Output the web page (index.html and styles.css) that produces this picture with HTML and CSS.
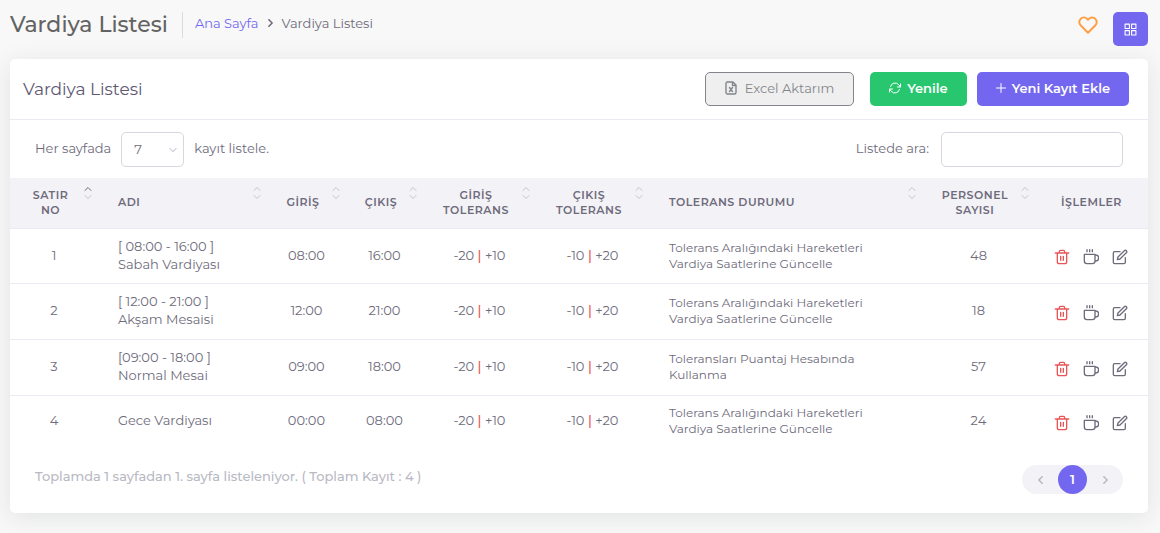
FILE: index.html
```html
<!DOCTYPE html>
<html lang="tr">
<head>
<meta charset="utf-8">
<meta name="viewport" content="width=device-width, initial-scale=1">
<title>Vardiya Listesi</title>
<link rel="stylesheet" href="styles.css">
</head>
<body>
<svg class="sprite" aria-hidden="true">
  <symbol id="trash" viewBox="0 0 24 24"><path d="M2 6h20M5 6v13a3 3 0 0 0 3 3h8a3 3 0 0 0 3-3V6M8 6V4a2 2 0 0 1 2-2h4a2 2 0 0 1 2 2v2M10 11v6M14 11v6"/></symbol>
  <symbol id="cup" viewBox="0 0 24 24"><path d="M2 8h16v10a4 4 0 0 1-4 4H6a4 4 0 0 1-4-4zM18 9h1a4 4 0 0 1 0 9h-1M6 1v3M10 1v3M14 1v3"/></symbol>
  <symbol id="edit" viewBox="0 0 24 24"><path d="M12 4H4a2 2 0 0 0-2 2v14a2 2 0 0 0 2 2h14a2 2 0 0 0 2-2v-7"/><path d="M18.500 2.500a2.100 2.100 0 0 1 3 3L12 15l-4 1 1-4z"/></symbol>
  <symbol id="down" viewBox="0 0 10 6"><path d="M1 1l4 4 4-4"/></symbol>
  <symbol id="sort" viewBox="0 0 8 12"><path class="up" d="M1 3.500l3-3 3 3"/><path class="dn" d="M1 8.500l3 3 3-3"/></symbol>
</svg>

<header class="page-head">
  <h1 class="page-title">Vardiya Listesi</h1>
  <nav class="crumbs" aria-label="Konum">
    <a href="#">Ana Sayfa</a>
    <svg class="crumb-arrow" viewBox="0 0 6 10"><path d="M1 1l4 4-4 4"/></svg>
    <span>Vardiya Listesi</span>
  </nav>
  <div class="page-tools">
    <button class="icon-btn heart" aria-label="Favorilere ekle"><svg viewBox="0 0 24 24"><path d="M20.840 4.610a5.500 5.500 0 0 0-7.780 0L12 5.670l-1.060-1.060a5.500 5.500 0 0 0-7.780 7.780L12 21.230l8.840-8.840a5.500 5.500 0 0 0 0-7.780z"/></svg></button>
    <button class="grid-btn" aria-label="Menü"><svg viewBox="0 0 24 24"><path d="M2 2h8v8H2zM14 2h8v8h-8zM14 14h8v8h-8zM2 14h8v8H2z"/></svg></button>
  </div>
</header>

<main class="card">
  <div class="card-head">
    <h2 class="card-title">Vardiya Listesi</h2>
    <div class="actions">
      <button class="btn btn-excel"><svg class="i-file" viewBox="0 0 12 14"><path d="M2.500 1H8l3 3v7.500A1.500 1.500 0 0 1 9.500 13h-7A1.500 1.500 0 0 1 1 11.500v-9A1.500 1.500 0 0 1 2.500 1zM7.500 1v3.500H11M4.500 6.500l3 4M7.500 6.500l-3 4"/></svg>Excel Aktarım</button>
      <button class="btn btn-green"><svg class="i-sync" viewBox="0 0 24 24"><path d="M23 4v6h-6M1 20v-6h6M3 9a9.500 9.500 0 0 1 16-4l4 5M1 14l4 5a9.500 9.500 0 0 0 16-4"/></svg>Yenile</button>
      <button class="btn btn-purple"><svg class="i-plus" viewBox="0 0 10 10"><path d="M5 0.500v9M0.500 5h9"/></svg>Yeni Kayıt Ekle</button>
    </div>
  </div>

  <div class="filters">
    <div class="field">
      <label for="size">Her sayfada</label>
      <span class="select-wrap">
        <select id="size" class="control select"><option>7</option><option>10</option><option>25</option></select>
        <svg class="caret" viewBox="0 0 10 6"><use href="#down"/></svg>
      </span>
      <label for="size">kayıt listele.</label>
    </div>
    <div class="field">
      <label for="search">Listede ara:</label>
      <input id="search" class="control search" type="search">
    </div>
  </div>

  <table class="grid">
    <colgroup><col class="c-no"><col class="c-name"><col class="c-in"><col class="c-out"><col class="c-tol"><col class="c-tol"><col class="c-state"><col class="c-tol"><col class="c-tol"></colgroup>
    <thead>
      <tr>
        <th class="asc">Satır No<svg class="sort"><use href="#sort"/></svg></th>
        <th class="left">Adı<svg class="sort"><use href="#sort"/></svg></th>
        <th>Giriş<svg class="sort"><use href="#sort"/></svg></th>
        <th>Çıkış<svg class="sort"><use href="#sort"/></svg></th>
        <th>Giriş Tolerans<svg class="sort"><use href="#sort"/></svg></th>
        <th>Çıkış Tolerans<svg class="sort"><use href="#sort"/></svg></th>
        <th class="left">Tolerans Durumu<svg class="sort"><use href="#sort"/></svg></th>
        <th>Personel Sayısı<svg class="sort"><use href="#sort"/></svg></th>
        <th class="plain">İşlemler</th>
      </tr>
    </thead>
    <tbody>
      <tr>
        <td>1</td><td class="left">[ 08:00 - 16:00 ]<br>Sabah Vardiyası</td><td>08:00</td><td>16:00</td>
        <td>-20 <i class="bar">|</i> +10</td><td>-10 <i class="bar">|</i> +20</td>
        <td class="left state">Tolerans Aralığındaki Hareketleri<br>Vardiya Saatlerine Güncelle</td><td>48</td>
        <td class="ops"><div class="ops-row"><button class="icon-btn red" aria-label="Sil"><svg><use href="#trash"/></svg></button><button class="icon-btn" aria-label="Molalar"><svg><use href="#cup"/></svg></button><button class="icon-btn" aria-label="Düzenle"><svg><use href="#edit"/></svg></button></div></td>
      </tr>
      <tr>
        <td>2</td><td class="left">[ 12:00 - 21:00 ]<br>Akşam Mesaisi</td><td>12:00</td><td>21:00</td>
        <td>-20 <i class="bar">|</i> +10</td><td>-10 <i class="bar">|</i> +20</td>
        <td class="left state">Tolerans Aralığındaki Hareketleri<br>Vardiya Saatlerine Güncelle</td><td>18</td>
        <td class="ops"><div class="ops-row"><button class="icon-btn red" aria-label="Sil"><svg><use href="#trash"/></svg></button><button class="icon-btn" aria-label="Molalar"><svg><use href="#cup"/></svg></button><button class="icon-btn" aria-label="Düzenle"><svg><use href="#edit"/></svg></button></div></td>
      </tr>
      <tr>
        <td>3</td><td class="left">[09:00 - 18:00 ]<br>Normal Mesai</td><td>09:00</td><td>18:00</td>
        <td>-20 <i class="bar">|</i> +10</td><td>-10 <i class="bar">|</i> +20</td>
        <td class="left state">Toleransları Puantaj Hesabında<br>Kullanma</td><td>57</td>
        <td class="ops"><div class="ops-row"><button class="icon-btn red" aria-label="Sil"><svg><use href="#trash"/></svg></button><button class="icon-btn" aria-label="Molalar"><svg><use href="#cup"/></svg></button><button class="icon-btn" aria-label="Düzenle"><svg><use href="#edit"/></svg></button></div></td>
      </tr>
      <tr>
        <td>4</td><td class="left">Gece Vardiyası</td><td>00:00</td><td>08:00</td>
        <td>-20 <i class="bar">|</i> +10</td><td>-10 <i class="bar">|</i> +20</td>
        <td class="left state">Tolerans Aralığındaki Hareketleri<br>Vardiya Saatlerine Güncelle</td><td>24</td>
        <td class="ops"><div class="ops-row"><button class="icon-btn red" aria-label="Sil"><svg><use href="#trash"/></svg></button><button class="icon-btn" aria-label="Molalar"><svg><use href="#cup"/></svg></button><button class="icon-btn" aria-label="Düzenle"><svg><use href="#edit"/></svg></button></div></td>
      </tr>
    </tbody>
  </table>

  <footer class="card-foot">
    <p class="summary">Toplamda 1 sayfadan 1. sayfa listeleniyor. ( Toplam Kayıt : 4 )</p>
    <nav class="pager" aria-label="Sayfalar">
      <button aria-label="Önceki"><svg viewBox="0 0 6 10"><path d="M5 1L1 5l4 4"/></svg></button>
      <button class="current" aria-current="page">1</button>
      <button aria-label="Sonraki"><svg viewBox="0 0 6 10"><path d="M1 1l4 4-4 4"/></svg></button>
    </nav>
  </footer>
</main>
</body>
</html>
```
FILE: styles.css
```css
* { box-sizing: border-box; }
body {
  margin: 0;
  padding: 0 12px 20px 10px;
  background: #f8f8f8;
  color: #6e6b7b;
  font: 400 13px/18px Montserrat, Inter, "Open Sans", sans-serif;
}
button, input, select { font: inherit; color: inherit; }
button { margin: 0; padding: 0; border: 0; background: none; cursor: pointer; }
svg { fill: none; stroke: currentColor; stroke-width: 2; stroke-linecap: round; stroke-linejoin: round; }
.sprite { display: none; }

.page-head { display: flex; align-items: flex-start; padding: 12px 0 13px; }
.page-title {
  margin: 0;
  padding-right: 14px;
  border-right: 1px solid #d6dce1;
  color: #636363;
  font-size: 22px;
  font-weight: 500;
  line-height: 26px;
}
.crumbs { display: flex; align-items: center; gap: 9px; padding: 2px 0 0 12px; }
.crumbs a { color: #7367f0; text-decoration: none; }
.crumb-arrow { width: 5px; height: 8px; }
.page-tools { display: flex; gap: 15px; margin-left: auto; }
.heart { height: 26px; color: #ff9f43; }
.heart svg { width: 20px; height: 20px; stroke-width: 2.4; }
.grid-btn {
  display: flex;
  align-items: center;
  justify-content: center;
  width: 35px;
  height: 34px;
  border-radius: 5px;
  background: #7367f0;
  color: #fff;
}
.grid-btn svg { width: 13px; height: 13px; }

.card { border-radius: 5px; background: #fff; box-shadow: 0 4px 24px rgba(34, 41, 47, 0.1); }
.card-head {
  display: flex;
  align-items: center;
  justify-content: space-between;
  padding: 13px 19px 13px 13px;
  border-bottom: 1px solid #ebe9f1;
}
.card-title { margin: 0; color: #5e5873; font-size: 17px; font-weight: 400; line-height: 24px; }
.actions { display: flex; gap: 10px; }
.btn {
  display: flex;
  align-items: center;
  gap: 6px;
  height: 34px;
  padding: 0 19px 2px;
  border-radius: 5px;
  color: #fff;
  font-weight: 600;
}
.btn svg { height: 12px; }
.btn-excel {
  gap: 8px;
  margin-right: 6px;
  border: 1px solid #82868b;
  background: #efefef;
  color: #82868b;
  font-weight: 400;
}
.btn .i-file { width: 12px; height: 14px; stroke-width: 1.4; }
.i-sync { width: 12px; stroke-width: 2; }
.btn-green { background: #28c76f; }
.btn-purple { background: #7367f0; }
.btn .i-plus { width: 10px; height: 10px; stroke-width: 1; }

.filters { display: flex; justify-content: space-between; padding: 12px 25px 11px; }
.field { display: flex; align-items: center; gap: 10px; }
.field label { padding-bottom: 3px; }
.control { height: 35px; border: 1px solid #d8d6de; border-radius: 5px; background: #fff; outline: 0; }
.select-wrap { position: relative; }
.select { display: block; width: 63px; padding: 0 12px 2px; appearance: none; }
.caret { position: absolute; top: 15px; right: 7px; width: 8px; height: 6px; color: #d0cdd8; stroke-width: 1.4; pointer-events: none; }
.search { width: 182px; padding: 0 12px; margin-left: 2px; }

.grid { width: 100%; border-collapse: collapse; table-layout: fixed; }
.c-no { width: 7.73%; }
.c-name { width: 14.85%; }
.c-in { width: 6.94%; }
.c-out { width: 6.77%; }
.c-tol { width: 9.93%; }
.c-state { width: 23.99%; }
.grid th {
  position: relative;
  height: 50px;
  padding: 0 23px 0 16px;
  background: #f3f2f7;
  font-size: 11px;
  font-weight: 600;
  line-height: 15px;
  letter-spacing: 0.5px;
  text-align: center;
  text-transform: uppercase;
}
.grid .plain { padding: 0; }
.grid td { height: 56px; padding: 0 0 2px; border-top: 1px solid #ebe9f1; text-align: center; }
.grid tr:first-child td { height: 55px; }
.grid tr:last-child td { height: 54px; padding-bottom: 4px; }
.grid .left { padding-left: 20px; text-align: left; }
.grid .state { padding: 0 0 0 20px; font-size: 12px; line-height: 16px; }
.grid tr:last-child .state { padding-bottom: 2px; }
.bar { color: #ea5455; font-style: normal; font-weight: 500; }
.sort { position: absolute; top: 9px; right: 6px; width: 8px; height: 12px; color: #c4c2cd; stroke-width: 1; }
.asc .sort { color: #6e6b7b; --down: #c4c2cd; }
.dn { stroke: var(--down, currentColor); }
.ops-row { display: flex; justify-content: center; gap: 13px; padding-top: 5px; }
.icon-btn { display: flex; align-items: center; }
.ops-row svg { width: 16px; height: 16px; }
.red { color: #ea5455; }

.card-foot { display: flex; align-items: flex-start; justify-content: space-between; padding: 16px 25px 19px; }
.summary { margin: 0; padding-top: 2px; color: #b9b9c3; font-weight: 500; }
.pager { display: flex; border-radius: 15px; background: #f3f2f7; }
.pager button {
  display: flex;
  align-items: center;
  justify-content: center;
  width: 36px;
  height: 29px;
  color: #b9b9c3;
}
.pager .current { width: 29px; padding-bottom: 2px; border-radius: 50%; background: #7367f0; color: #fff; font-weight: 600; }
.pager svg { width: 5px; height: 8px; }
```
